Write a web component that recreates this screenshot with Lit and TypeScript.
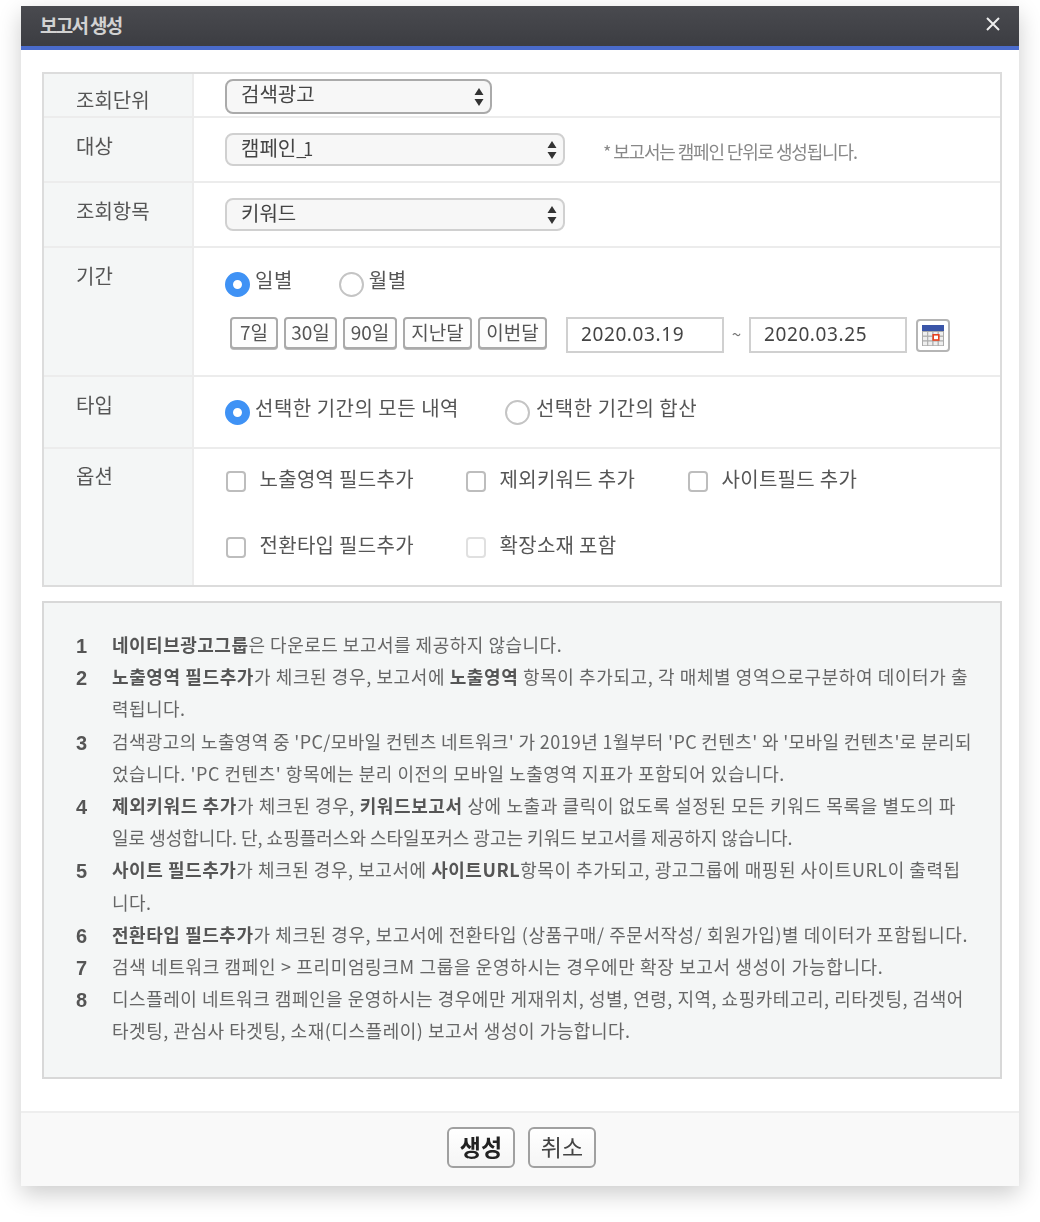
import { LitElement, html, css, svg } from "lit";
import { customElement } from "lit/decorators.js";

const arrows = html`<svg class="arrows" width="12" height="20" viewBox="0 0 12 20">
  <path d="M6 1 L10.5 8 H1.5 Z M6 19 L1.5 12 H10.5 Z" fill="#333" />
</svg>`;

const closeIcon = html`<svg width="16" height="16" viewBox="0 0 16 16">
  <path d="M2 2 L14 14 M14 2 L2 14" stroke="#eee" stroke-width="2" fill="none" />
</svg>`;

// grid cells of the little calendar
const calCells = [0, 1, 2, 3].flatMap((c) =>
  [0, 1, 2].map(
    (r) => svg`<rect x="${0.5 + c * 5.25}" y="${6.5 + r * 4.75}" width="5.25" height="4.75" fill="#eee" stroke="#aaa" />`
  )
);

const calendar = html`<svg width="22" height="21" viewBox="0 0 22 21">
  ${calCells}
  <rect x="0" y="0" width="22" height="6" fill="#3a55a8" />
  <rect x="11.2" y="9.8" width="5.6" height="5.2" fill="#fff" stroke="#e8401c" stroke-width="1.6" />
</svg>`;

// each note is a list of [letter-spacing, line]; the source breaks lines mid-word
const notes: [number, unknown][][] = [
  [[0.5, html`<b>네이티브광고그룹</b>은 다운로드 보고서를 제공하지 않습니다.`]],
  [
    [0.6, html`<b>노출영역 필드추가</b>가 체크된 경우, 보고서에 <b>노출영역</b> 항목이 추가되고, 각 매체별 영역으로구분하여 데이터가 출`],
    [0.45, html`력됩니다.`],
  ],
  [
    [0.36, html`검색광고의 노출영역 중 'PC/모바일 컨텐츠 네트워크' 가 2019년 1월부터 'PC 컨텐츠' 와 '모바일 컨텐츠'로 분리되`],
    [0.53, html`었습니다. 'PC 컨텐츠' 항목에는 분리 이전의 모바일 노출영역 지표가 포함되어 있습니다.`],
  ],
  [
    [0.62, html`<b>제외키워드 추가</b>가 체크된 경우, <b>키워드보고서</b> 상에 노출과 클릭이 없도록 설정된 모든 키워드 목록을 별도의 파`],
    [0, html`일로 생성합니다. 단, 쇼핑플러스와 스타일포커스 광고는 키워드 보고서를 제공하지 않습니다.`],
  ],
  [
    [0.54, html`<b>사이트 필드추가</b>가 체크된 경우, 보고서에 <b>사이트URL</b>항목이 추가되고, 광고그룹에 매핑된 사이트URL이 출력됩`],
    [0.45, html`니다.`],
  ],
  [[0.56, html`<b>전환타입 필드추가</b>가 체크된 경우, 보고서에 전환타입 (상품구매/ 주문서작성/ 회원가입)별 데이터가 포함됩니다.`]],
  [[0.65, html`검색 네트워크 캠페인 &gt; 프리미엄링크M 그룹을 운영하시는 경우에만 확장 보고서 생성이 가능합니다.`]],
  [
    [0.52, html`디스플레이 네트워크 캠페인을 운영하시는 경우에만 게재위치, 성별, 연령, 지역, 쇼핑카테고리, 리타겟팅, 검색어`],
    [0.53, html`타겟팅, 관심사 타겟팅, 소재(디스플레이) 보고서 생성이 가능합니다.`],
  ],
];

@customElement("app-root")
export class AppRoot extends LitElement {
  static styles = css`
    :host {
      display: block;
      width: 1040px;
      height: 1222px;
      padding: 6px 0 0 21px;
      box-sizing: border-box;
      background: #fff;
      font-family: "Noto Sans CJK KR", "Noto Sans", sans-serif;
      color: #555;
      overflow: hidden;
    }
    .modal {
      width: 998px;
      height: 1180px;
      background: #fff;
      box-shadow: 0 8px 22px rgba(0, 0, 0, 0.2);
      display: flex;
      flex-direction: column;
      filter: blur(0.6px);
    }
    .head {
      height: 36px;
      flex: none;
      background: linear-gradient(#494a4f, #3c3d42);
      border-bottom: 4px solid #4a6bcb;
      display: flex;
      align-items: center;
      justify-content: space-between;
      padding: 0 18px 4px 19px;
      color: #d2d2d2;
      font-size: 19px;
      font-weight: 700;
      letter-spacing: -1.7px;
    }
    .body {
      flex: 1;
      padding: 22px 17px 0 21px;
    }
    .form {
      border-style: solid;
      border-width: 2px 2px 0 2px;
      border-color: #dcdcdc;
    }
    .row {
      display: grid;
      grid-template-columns: 150px 1fr;
      border-bottom: 2px solid #ececec;
    }
    .row.r6 {
      border-bottom-color: #dcdcdc;
    }
    .th {
      background: #f4f6f6;
      border-right: 2px solid #ececec;
      padding-left: 32px;
      box-sizing: border-box;
      font-size: 20px;
      line-height: 28px;
      color: #555;
    }
    .td {
      padding-left: 31px;
      font-size: 20px;
      line-height: 28px;
    }
    .r1 .th { height: 42px; padding-top: 12px; }
    .r1 .td { padding-top: 5px; }
    .r2 .th, .r3 .th { height: 63px; padding-top: 14px; }
    .r2 .td, .r3 .td { padding-top: 15px; display: flex; align-items: flex-start; }
    .r4 .th { height: 127px; padding-top: 14px; }
    .r5 .th { height: 70px; padding-top: 14px; }
    .r6 .th { height: 136px; padding-top: 13px; }
    .select {
      height: 33px;
      box-sizing: border-box;
      background: #f7f7f7;
      border: 2px solid #d0d0d0;
      border-radius: 8px;
      padding: 0 5px 4px 14px;
      display: flex;
      align-items: center;
      justify-content: space-between;
      line-height: 26px;
      color: #444;
    }
    .select.w1 {
      width: 267px;
      height: 35px;
      padding-bottom: 6px;
      border-color: #aaa;
    }
    .select.w2 { width: 340px; }
    .arrows {
      flex: none;
      transform: translateY(2px);
    }
    .w1 .arrows { transform: translateY(3px); }
    .tight {
      font-size: 18px;
      letter-spacing: -3px;
    }
    .hint {
      margin: 4px 0 0 38px;
      font-size: 18px;
      color: #888;
      letter-spacing: -1.15px;
    }
    .radios {
      display: flex;
      align-items: center;
      height: 26px;
    }
    .radio {
      flex: none;
      width: 25px;
      height: 25px;
      box-sizing: border-box;
      border-radius: 50%;
      border: 2px solid #c4c4c4;
      background: #fff;
      margin-right: 5px;
    }
    .radio.on {
      border: 8.5px solid #3f92f5;
    }
    .opt-label {
      letter-spacing: 0.5px;
      white-space: nowrap;
      transform: translateY(-4px);
    }
    .r4 .radios { margin-top: 23px; }
    .r4 .radio.second { margin-left: 46px; }
    .r5 .radios { margin-top: 22px; }
    .r5 .radio.second { margin-left: 46px; margin-right: 6px; }
    .dates {
      display: flex;
      align-items: flex-start;
      margin-top: 20px;
      margin-left: 5px;
      height: 36px;
    }
    .chip {
      height: 32px;
      box-sizing: border-box;
      border: 2px solid #aaa;
      border-radius: 4px;
      background: #fdfdfd;
      box-shadow: 0 1px 0 #bbb;
      margin-right: 6px;
      padding-bottom: 3px;
      display: flex;
      align-items: center;
      justify-content: center;
      font-size: 19px;
      color: #555;
    }
    .date {
      width: 158px;
      height: 36px;
      box-sizing: border-box;
      border: 2px solid #d0d0d0;
      padding: 0 0 2px 13px;
      display: flex;
      align-items: center;
      font-family: "Noto Sans", sans-serif;
      font-size: 19px;
      letter-spacing: 0.6px;
      color: #444;
    }
    .first { margin-left: 13px; }
    .tilde {
      width: 25px;
      text-align: center;
      font-size: 17px;
      line-height: 34px;
      color: #777;
    }
    .cal {
      margin: 2px 0 0 9px;
      width: 34px;
      height: 33px;
      box-sizing: border-box;
      border: 2px solid #b5b5b5;
      border-radius: 4px;
      display: flex;
      align-items: center;
      justify-content: center;
    }
    .checks {
      display: grid;
      grid-template-columns: 240px 222px auto;
      grid-auto-rows: 66px;
      margin-top: 2px;
      justify-content: start;
    }
    .check {
      display: flex;
      align-items: center;
      height: 60px;
      white-space: nowrap;
      letter-spacing: 0.3px;
    }
    .box {
      flex: none;
      width: 20px;
      height: 21px;
      box-sizing: border-box;
      margin: 0 13.5px 0 1px;
      border: 2px solid #bdbdbd;
      border-radius: 4px;
      background: #fff;
    }
    .box.off { border-color: #e0e0e0; }
    .check span {
      transform: translateY(-2px);
    }
    .notes {
      margin: 14px 0 0;
      height: 478px;
      box-sizing: border-box;
      background: #f4f6f6;
      border: 2px solid #d8d8d8;
      padding: 25px 0 0 32px;
      list-style: none;
      font-size: 18px;
      line-height: 32.2px;
      color: #666;
    }
    .notes li {
      display: flex;
      white-space: nowrap;
    }
    .notes i {
      flex: none;
      width: 36px;
      font-family: "Liberation Sans", sans-serif;
      font-style: normal;
      font-weight: 700;
      font-size: 20px;
      color: #555;
      transform: translateY(2px);
    }
    .notes b { color: #555; }
    .foot {
      flex: none;
      height: 75px;
      box-sizing: border-box;
      background: #f9f9f9;
      border-top: 2px solid #eee;
      display: flex;
      justify-content: center;
      align-items: flex-start;
      gap: 13px;
      padding: 14px 0 0 3px;
    }
    .btn {
      width: 68px;
      height: 41px;
      box-sizing: border-box;
      border: 2px solid #a0a0a0;
      border-radius: 6px;
      background: linear-gradient(#fff, #f5f5f5);
      padding-bottom: 4px;
      display: flex;
      align-items: center;
      justify-content: center;
      font-size: 23px;
      color: #444;
    }
    .btn.main {
      font-weight: 700;
      color: #222;
    }
  `;

  render() {
    return html`
      <div class="modal">
        <div class="head"><span>보고서 생성</span>${closeIcon}</div>
        <div class="body">
          <div class="form">
            <div class="row r1">
              <div class="th">조회단위</div>
              <div class="td"><div class="select w1">검색광고 ${arrows}</div></div>
            </div>
            <div class="row r2">
              <div class="th">대상</div>
              <div class="td">
                <div class="select w2"><span>캠페인<span class="tight">_1</span></span> ${arrows}</div>
                <div class="hint">* 보고서는 캠페인 단위로 생성됩니다.</div>
              </div>
            </div>
            <div class="row r3">
              <div class="th">조회항목</div>
              <div class="td"><div class="select w2">키워드 ${arrows}</div></div>
            </div>
            <div class="row r4">
              <div class="th">기간</div>
              <div class="td">
                <div class="radios">
                  <span class="radio on"></span><span class="opt-label">일별</span>
                  <span class="radio second"></span><span class="opt-label">월별</span>
                </div>
                <div class="dates">
                  <div class="chip" style="width:48px">7일</div>
                  <div class="chip" style="width:53px">30일</div>
                  <div class="chip" style="width:54px">90일</div>
                  <div class="chip" style="width:69px">지난달</div>
                  <div class="chip" style="width:69px">이번달</div>
                  <div class="date first">2020.03.19</div>
                  <div class="tilde">~</div>
                  <div class="date">2020.03.25</div>
                  <div class="cal">${calendar}</div>
                </div>
              </div>
            </div>
            <div class="row r5">
              <div class="th">타입</div>
              <div class="td">
                <div class="radios">
                  <span class="radio on"></span><span class="opt-label">선택한 기간의 모든 내역</span>
                  <span class="radio second"></span><span class="opt-label">선택한 기간의 합산</span>
                </div>
              </div>
            </div>
            <div class="row r6">
              <div class="th">옵션</div>
              <div class="td">
                <div class="checks">
                  <label class="check"><i class="box"></i><span>노출영역 필드추가</span></label>
                  <label class="check"><i class="box"></i><span>제외키워드 추가</span></label>
                  <label class="check"><i class="box"></i><span>사이트필드 추가</span></label>
                  <label class="check"><i class="box"></i><span>전환타입 필드추가</span></label>
                  <label class="check"><i class="box off"></i><span>확장소재 포함</span></label>
                </div>
              </div>
            </div>
          </div>
          <ol class="notes">
            ${notes.map(
              (lines, i) => html`<li>
                <i>${i + 1}</i>
                <div>${lines.map(([sp, line]) => html`<div style="letter-spacing:${sp}px">${line}</div>`)}</div>
              </li>`
            )}
          </ol>
        </div>
        <div class="foot">
          <div class="btn main">생성</div>
          <div class="btn">취소</div>
        </div>
      </div>
    `;
  }
}
